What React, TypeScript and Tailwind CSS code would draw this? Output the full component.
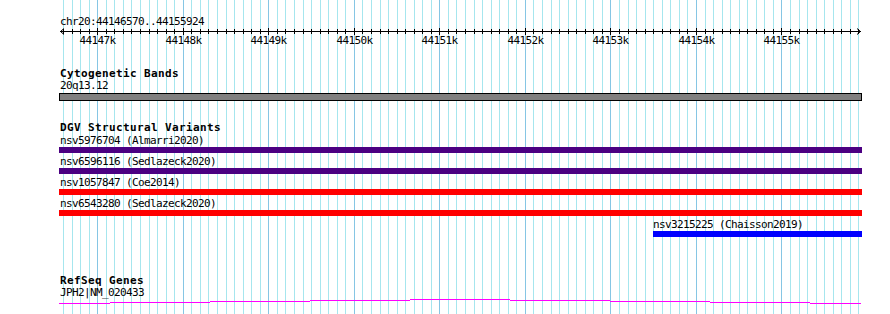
import React from 'react';

// genomic coordinate -> pixel
const START = 44146570;
const BP_PER_PX = 11.6925;
const toX = (bp: number) => 60.5 + (bp - START) / BP_PER_PX;

const gridLines: { x: number; major: boolean }[] = [];
for (let bp = 44146600; bp <= 44155900; bp += 100) {
    gridLines.push({ x: Math.round(toX(bp)) + 0.5, major: bp % 1000 === 0 });
}
const majors = gridLines.filter((g) => g.major);

const small = "font-['DejaVu_Sans_Mono','Liberation_Mono',monospace] text-[11px] leading-[11px] tracking-[-0.62px] text-black whitespace-pre";
const bold = "font-['DejaVu_Sans_Mono','Liberation_Mono',monospace] font-bold text-[11px] leading-[11px] tracking-[0.38px] text-black whitespace-pre";

const variants = [
    { name: 'nsv5976704 (Almarri2020)', color: 'bg-[#4b0082]' },
    { name: 'nsv6596116 (Sedlazeck2020)', color: 'bg-[#4b0082]' },
    { name: 'nsv1057847 (Coe2014)', color: 'bg-[#ff0000]' },
    { name: 'nsv6543280 (Sedlazeck2020)', color: 'bg-[#ff0000]' },
];

// transcript line, a slight arch
const geneSteps = [
    [59, 110, 303], [110, 210, 302], [210, 310, 301], [310, 410, 300], [410, 510, 299],
    [510, 610, 300], [610, 710, 301], [710, 810, 302], [810, 861, 303],
];

const App = () => {
    return (
        <div className="relative w-[890px] h-[314px] bg-white overflow-hidden">
            {/* background grid */}
            <svg className="absolute inset-0" width={890} height={314}>
                {gridLines.map((g) => (
                    <line key={g.x} x1={g.x} x2={g.x} y1={0} y2={314} stroke={g.major ? '#86c6e4' : '#a6e6ee'} strokeWidth={1} />
                ))}
            </svg>

            <div className="relative flex flex-col pt-[16px]">
                <div className={`${small} pl-[60px]`}>chr20:44146570..44155924</div>

                {/* ruler */}
                <div className="relative h-[19px]">
                    <svg className="absolute left-0 top-0" width={890} height={10}>
                        <line x1={60} x2={861} y1={4.5} y2={4.5} stroke="#000" />
                        <polyline points="64,1.5 60.5,4.5 64,7.5" fill="none" stroke="#000" />
                        <polyline points="857,1.5 860.5,4.5 857,7.5" fill="none" stroke="#000" />
                        {gridLines.map((g) => (
                            <line key={g.x} x1={g.x} x2={g.x} y1={g.major ? 1 : 2} y2={g.major ? 8 : 7} stroke="#000" />
                        ))}
                    </svg>
                    {majors.map((g, i) => (
                        <span key={g.x} className={`${small} absolute top-[8px]`} style={{ left: g.x - 18 }}>
                            {44147 + i}k
                        </span>
                    ))}
                </div>

                {/* cytobands */}
                <div className={`${bold} pl-[60px] mt-[22px]`}>Cytogenetic Bands</div>
                <div className={`${small} pl-[60px] mt-[1px]`}>20q13.12</div>
                <div className="ml-[59px] w-[803px] h-[8px] mt-[2px] bg-[#808080] border border-black" />

                {/* DGV */}
                <div className={`${bold} pl-[60px] mt-[21px]`}>DGV Structural Variants</div>
                <div className="flex flex-col mt-[-1px]">
                    {variants.map((v) => (
                        <div key={v.name} className="flex flex-col">
                            <div className={`${small} pl-[60px] mt-[3px]`}>{v.name}</div>
                            <div className={`ml-[59px] w-[803px] h-[6px] mt-[1px] ${v.color}`} />
                        </div>
                    ))}
                    <div className="flex flex-col">
                        <div className={`${small} pl-[653px] mt-[3px]`}>nsv3215225 (Chaisson2019)</div>
                        <div className="ml-[653px] w-[209px] h-[6px] mt-[1px] bg-[#0000ff]" />
                    </div>
                </div>

                {/* RefSeq */}
                <div className={`${bold} pl-[60px] mt-[38px]`}>RefSeq Genes</div>
                <div className={`${small} pl-[60px] mt-[1px]`}>JPH2|NM_020433</div>
                <svg className="block" width={890} height={8}>
                    {geneSteps.map(([a, b, y]) => (
                        <line key={a} x1={a} x2={b} y1={y - 298 + 0.5} y2={y - 298 + 0.5} stroke="#ff00ff" strokeWidth={1} />
                    ))}
                </svg>
            </div>
        </div>
    );
};

export default App;
